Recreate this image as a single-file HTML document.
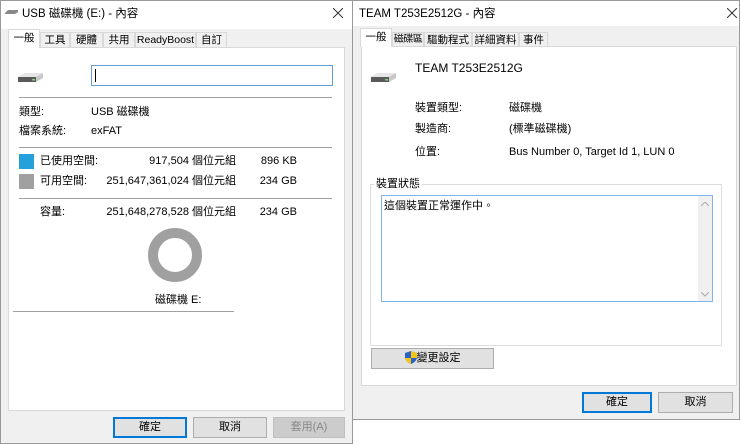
<!DOCTYPE html>
<html><head><meta charset="utf-8"><style>
*{margin:0;padding:0;box-sizing:border-box}
body{width:740px;height:445px;background:#fff;position:relative;overflow:hidden;font-family:"Liberation Sans","Noto Sans CJK TC",sans-serif;font-size:11px;color:#000;line-height:14px}
.a{position:absolute;white-space:nowrap;line-height:14px}
.win{position:absolute;background:#f0f0f0;border:1px solid #9a9a9a}
.tb{position:absolute;left:0;right:0;top:0;background:#fff}
.panel{position:absolute;background:#fff;border:1px solid #d9d9d9}
.tab{position:absolute;border:1px solid #d9d9d9;border-bottom:none;background:#f0f0f0;text-align:center;line-height:14px;font-size:10.5px;white-space:nowrap;overflow:visible}
.tab.sel{background:#fff;z-index:2;line-height:16px}
.sep{position:absolute;height:1px;background:#a0a0a0}
.btn{position:absolute;background:#e1e1e1;border:1px solid #adadad;text-align:center;line-height:18px;font-size:11px}
.btn.def{border:2px solid #0078d7;line-height:16px}
.r{text-align:right}
</style></head><body>

<div class="win" style="left:0;top:0;width:353px;height:444px">
 <div class="tb" style="height:28px"></div>
</div>
<svg class="a" style="left:5px;top:9px" width="14" height="6"><path d="M0 4 L3 1 L13 1 L13 3 L10 5 L0 5Z" fill="#888"/></svg>
<div class="a" style="left:22px;top:7px;font-size:11.5px">USB 磁碟機 (E:) - 內容</div>
<svg class="a" style="left:333px;top:8px" width="10" height="10"><path d="M0 0L10 10M10 0L0 10" stroke="#333" stroke-width="1"/></svg>

<div class="tab sel" style="left:8px;top:29px;width:32px;height:19px">一般</div>
<div class="tab" style="left:40px;top:32px;width:30px;height:15px">工具</div>
<div class="tab" style="left:70px;top:32px;width:33px;height:15px">硬體</div>
<div class="tab" style="left:103px;top:32px;width:32px;height:15px">共用</div>
<div class="tab" style="left:135px;top:32px;width:61px;height:15px">ReadyBoost</div>
<div class="tab" style="left:196px;top:32px;width:31px;height:15px">自訂</div>
<div class="panel" style="left:8px;top:47px;width:337px;height:364px"></div>

<svg class="a" style="left:17px;top:70px" width="28" height="14"><path d="M1 7 L8 3 L26 3 L26 8 L19 12 L1 12 Z" fill="#c8c8c8"/><path d="M1 7 L19 7 L26 3 L8 3Z" fill="#e6e6e6"/><path d="M1 7 L19 7 L19 12 L1 12Z" fill="#5a5a5a"/><rect x="15" y="9" width="3" height="1.5" fill="#7fd07f"/></svg>
<div class="a" style="left:91px;top:65px;width:242px;height:21px;border:1px solid #5fa0d8;background:#fff"><div style="position:absolute;left:3px;top:3px;width:1px;height:13px;background:#000"></div></div>
<div class="sep" style="left:19px;top:97px;width:313px"></div>
<div class="a" style="left:19px;top:105px">類型:</div><div class="a" style="left:91px;top:105px">USB 磁碟機</div>
<div class="a" style="left:19px;top:124px">檔案系統:</div><div class="a" style="left:91px;top:124px">exFAT</div>
<div class="sep" style="left:19px;top:147px;width:313px"></div>
<div class="a" style="left:19px;top:154px;width:15px;height:15px;background:#26a0da"></div>
<div class="a" style="left:40px;top:154px">已使用空間:</div>
<div class="a r" style="left:100px;top:154px;width:136px">917,504 個位元組</div>
<div class="a r" style="left:240px;top:154px;width:57px">896 KB</div>
<div class="a" style="left:19px;top:174px;width:15px;height:15px;background:#a0a0a0"></div>
<div class="a" style="left:40px;top:174px">可用空間:</div>
<div class="a r" style="left:100px;top:174px;width:136px">251,647,361,024 個位元組</div>
<div class="a r" style="left:240px;top:174px;width:57px">234 GB</div>
<div class="sep" style="left:19px;top:198px;width:313px"></div>
<div class="a" style="left:40px;top:205px">容量:</div>
<div class="a r" style="left:100px;top:205px;width:136px">251,648,278,528 個位元組</div>
<div class="a r" style="left:240px;top:205px;width:57px">234 GB</div>
<div class="a" style="left:148px;top:228px;width:54px;height:54px;border-radius:50%;border:10px solid #a0a0a0"></div>
<div class="a" style="left:155px;top:293px">磁碟機 E:</div>
<div class="sep" style="left:13px;top:311px;width:221px"></div>
<div class="btn def" style="left:113px;top:417px;width:74px;height:21px">確定</div>
<div class="btn" style="left:193px;top:417px;width:74px;height:21px">取消</div>
<div class="btn" style="left:273px;top:417px;width:72px;height:21px;color:#888;background:#ccc;border-color:#bfbfbf">套用(A)</div>

<div class="win" style="left:352px;top:0;width:388px;height:420px">
 <div class="tb" style="height:25px"></div>
</div>
<div class="a" style="left:359px;top:7px;font-size:11.5px">TEAM T253E2512G - 內容</div>
<svg class="a" style="left:727px;top:8px" width="10" height="10"><path d="M0 0L10 10M10 0L0 10" stroke="#333" stroke-width="1"/></svg>
<div class="tab sel" style="left:360px;top:28px;width:32px;height:19px">一般</div>
<div class="tab" style="left:392px;top:32px;width:32px;height:15px;font-size:10px;letter-spacing:-0.5px">磁碟區</div>
<div class="tab" style="left:424px;top:32px;width:48px;height:15px">驅動程式</div>
<div class="tab" style="left:472px;top:32px;width:47px;height:15px">詳細資料</div>
<div class="tab" style="left:519px;top:32px;width:29px;height:15px">事件</div>
<div class="panel" style="left:361px;top:46px;width:376px;height:340px"></div>
<svg class="a" style="left:370px;top:70px" width="28" height="14"><path d="M1 7 L8 3 L26 3 L26 8 L19 12 L1 12 Z" fill="#c8c8c8"/><path d="M1 7 L19 7 L26 3 L8 3Z" fill="#e6e6e6"/><path d="M1 7 L19 7 L19 12 L1 12Z" fill="#5a5a5a"/><rect x="15" y="9" width="3" height="1.5" fill="#7fd07f"/></svg>
<div class="a" style="left:415px;top:61px;font-size:12px">TEAM T253E2512G</div>
<div class="a" style="left:415px;top:101px">裝置類型:</div><div class="a" style="left:509px;top:101px">磁碟機</div>
<div class="a" style="left:415px;top:122px">製造商:</div><div class="a" style="left:509px;top:122px">(標準磁碟機)</div>
<div class="a" style="left:415px;top:145px">位置:</div><div class="a" style="left:509px;top:145px">Bus Number 0, Target Id 1, LUN 0</div>
<div class="a" style="left:370px;top:184px;width:352px;height:162px;border:1px solid #dcdcdc"></div>
<div class="a" style="left:374px;top:177px;background:#fff;padding:0 2px">裝置狀態</div>
<div class="a" style="left:381px;top:195px;width:332px;height:107px;border:1px solid #7eb4ea;background:#fff"></div>
<div class="a" style="left:698px;top:196px;width:14px;height:105px;background:#f0f0f0"></div>
<svg class="a" style="left:701px;top:202px" width="8" height="5"><path d="M0 4L4 0L8 4" stroke="#aaa" fill="none"/></svg>
<svg class="a" style="left:701px;top:292px" width="8" height="5"><path d="M0 0L4 4L8 0" stroke="#aaa" fill="none"/></svg>
<div class="a" style="left:384px;top:199px">這個裝置正常運作中。</div>
<div class="btn" style="left:371px;top:348px;width:123px;height:21px">
 <svg style="vertical-align:-3px" width="12" height="13"><path d="M6 0 L12 2 L12 7 Q11 11 6 13 Q1 11 0 7 L0 2Z" fill="#2a62c8"/><path d="M6 0 L12 2 L12 7 L6 7Z" fill="#f2c418"/><path d="M0 7 L6 7 L6 13 Q1 11 0 7Z" fill="#f2c418"/></svg>變更設定</div>
<div class="btn def" style="left:582px;top:392px;width:70px;height:21px">確定</div>
<div class="btn" style="left:658px;top:392px;width:75px;height:21px">取消</div>
</body></html>
